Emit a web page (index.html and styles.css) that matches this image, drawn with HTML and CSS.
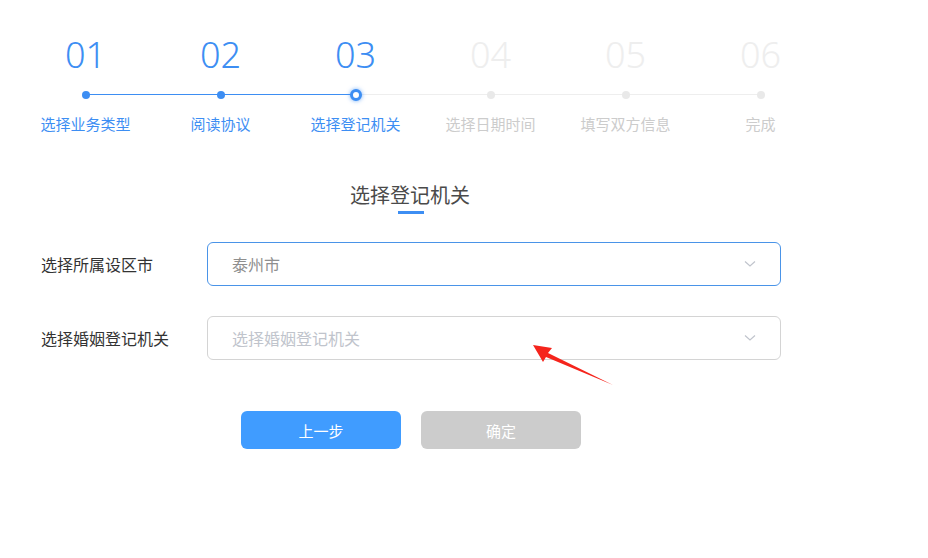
FILE: index.html
```html
<!DOCTYPE html>
<html lang="zh">
<head>
<meta charset="utf-8">
<link rel="stylesheet" href="styles.css">
</head>
<body>
<div class="page">
  <div class="steps">
    <div class="track"><div class="track-done"></div></div>
    <div class="step done"><div class="num">01</div><div class="dot"></div><div class="label">选择业务类型</div></div>
    <div class="step done"><div class="num">02</div><div class="dot"></div><div class="label">阅读协议</div></div>
    <div class="step done active"><div class="num">03</div><div class="dot"></div><div class="label">选择登记机关</div></div>
    <div class="step"><div class="num">04</div><div class="dot"></div><div class="label">选择日期时间</div></div>
    <div class="step"><div class="num">05</div><div class="dot"></div><div class="label">填写双方信息</div></div>
    <div class="step"><div class="num">06</div><div class="dot"></div><div class="label">完成</div></div>
  </div>

  <div class="title">选择登记机关</div>

  <div class="form">
    <div class="row">
      <div class="row-label">选择所属设区市</div>
      <div class="select focused">
        <span class="value">泰州市</span>
        <svg class="chev" width="12" height="8" viewBox="0 0 12 8"><path d="M1 1.5 L6 6 L11 1.5" fill="none" stroke="#c0c4cc" stroke-width="1.2"/></svg>
      </div>
    </div>
    <div class="row">
      <div class="row-label">选择婚姻登记机关</div>
      <div class="select">
        <span class="placeholder">选择婚姻登记机关</span>
        <svg class="chev" width="12" height="8" viewBox="0 0 12 8"><path d="M1 1.5 L6 6 L11 1.5" fill="none" stroke="#c0c4cc" stroke-width="1.2"/></svg>
      </div>
      <svg class="arrow" width="90" height="50" viewBox="0 0 90 50">
        <path d="M82 43 L17 11 L21 6 L2 3 L12 20 L15 15 Z" fill="#f5241c"/>
      </svg>
    </div>
  </div>

  <div class="buttons">
    <div class="btn primary">上一步</div>
    <div class="btn disabled">确定</div>
  </div>
</div>
</body>
</html>
```

FILE: styles.css
```css
* { box-sizing: border-box; }
html, body { margin: 0; padding: 0; background: #fff; }
body { font-family: "Noto Sans CJK SC", "Noto Sans", sans-serif; color: #333; }
.page { width: 928px; height: 558px; position: relative; }

.steps {
  position: relative;
  display: flex;
  margin-left: 18px;
  width: 810px;
  padding-top: 30px;
}
.track {
  position: absolute;
  left: 68px;
  top: 94px;
  width: 675px;
  height: 1px;
  background: #eeeeee;
}
.track-done { width: 270px; height: 1px; background: #3d8ef3; }
.step {
  width: 135px;
  display: flex;
  flex-direction: column;
  align-items: center;
  position: relative;
}
.num {
  font-family: "Noto Sans", sans-serif;
  font-weight: 300;
  font-size: 36px;
  line-height: 50px;
  height: 50px;
  color: #eeeeee;
}
.dot {
  width: 8px;
  height: 8px;
  border-radius: 50%;
  background: #e9e9e9;
  margin-top: 11px;
  position: relative;
  z-index: 1;
}
.label {
  margin-top: 14px;
  font-size: 15px;
  line-height: 22px;
  color: #cccccc;
}
.step.done .num, .step.done .label { color: #3d8ef3; }
.step.done .dot { background: #3d8ef3; }
.step.active .dot {
  width: 12px;
  height: 12px;
  margin-top: 9px;
  margin-bottom: -2px;
  background: #fff;
  border: 3px solid #3d8ef3;
  box-shadow: 0 0 4px rgba(61, 142, 243, 0.7);
}

.title {
  margin-top: 46px;
  margin-left: 350px;
  width: 120px;
  text-align: center;
  font-size: 20px;
  line-height: 28px;
  color: #4a4a4a;
  position: relative;
  padding-bottom: 5px;
}
.title::after {
  content: "";
  position: absolute;
  left: 48px;
  bottom: 0;
  width: 26px;
  height: 3px;
  background: #3d8ef3;
}

.form { margin-top: 28px; }
.row {
  display: flex;
  align-items: center;
  position: relative;
  height: 44px;
  margin-bottom: 30px;
}
.row-label {
  width: 207px;
  padding-left: 41px;
  font-size: 16px;
  color: #333;
}
.select {
  width: 574px;
  height: 44px;
  border: 1px solid #d4d4d4;
  border-radius: 6px;
  display: flex;
  align-items: center;
  justify-content: space-between;
  padding: 0 24px 0 24px;
  font-size: 16px;
}
.select.focused { border-color: #4a94e8; }
.value { color: #8f8f8f; }
.placeholder { color: #c0c4cc; }
.arrow {
  position: absolute;
  left: 531px;
  top: 26px;
}

.buttons {
  display: flex;
  gap: 20px;
  margin-left: 241px;
  margin-top: 51px;
}
.btn {
  width: 160px;
  height: 38px;
  border-radius: 6px;
  display: flex;
  align-items: center;
  justify-content: center;
  font-size: 15px;
  color: #fff;
}
.btn.primary { background: #409cff; }
.btn.disabled { background: #cccccc; }
```
